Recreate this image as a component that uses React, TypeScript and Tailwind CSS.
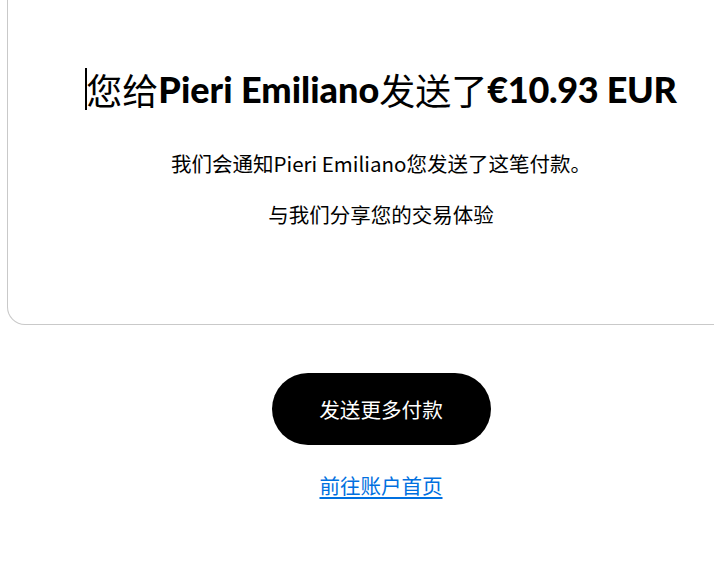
import React from "react";

export default function App() {
  return (
    <div className="w-[714px] h-[562px] overflow-hidden bg-white text-black font-['Noto_Sans_CJK_SC',sans-serif]">
      <div className="ml-[7px] w-[748px] flex flex-col items-center">
        <div className="w-full border-x border-b border-[#c9c9c9] rounded-b-[18px] pt-[65px] pb-[95px] flex flex-col items-center">
          <h1 className="h-[48px] flex items-center text-[36px] leading-[48px] whitespace-nowrap">
            <span className="inline-block w-[2px] h-[42px] bg-black mr-[-1px]" />
            <span className="font-normal">您给</span>
            <span className="font-[Lato,sans-serif] font-black">Pieri Emiliano</span>
            <span className="font-normal">发送了</span>
            <span className="font-[Lato,sans-serif] font-black tracking-[-0.3px]">€10.93 EUR</span>
          </h1>
          <p className="mt-[35px] text-[20.5px] leading-[30px] whitespace-nowrap">
            我们会通知Pieri Emiliano您发送了这笔付款。
          </p>
          <p className="mt-[21px] text-[20.5px] leading-[30px] whitespace-nowrap">
            与我们分享您的交易体验
          </p>
        </div>
        <button className="mt-[48px] w-[219px] h-[72px] rounded-full bg-black text-white text-[20.6px] leading-[30px] flex items-center justify-center">
          发送更多付款
        </button>
        <a
          href="#"
          className="mt-[25px] text-[20.5px] leading-[30px] text-[#0070e0] underline underline-offset-[3px]"
        >
          前往账户首页
        </a>
      </div>
    </div>
  );
}
